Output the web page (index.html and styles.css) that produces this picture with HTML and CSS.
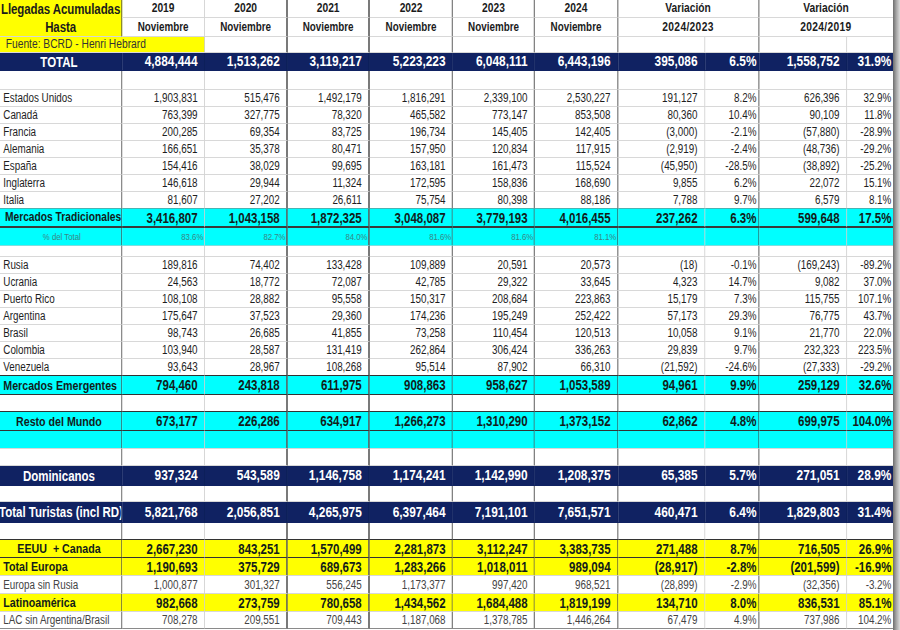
FILE: index.html
```html
<!DOCTYPE html>
<html lang="es">
<head>
<meta charset="utf-8">
<title>Llegadas Acumuladas</title>
<link rel="stylesheet" href="styles.css">
</head>
<body>
<div class="page">
<div class="sheet-wrap">
<table class="sheet">
<colgroup>
<col class="w-lab"><col class="w-yr"><col class="w-yr"><col class="w-yr2"><col class="w-yr"><col class="w-yr2"><col class="w-yr"><col class="w-vn"><col class="w-vp"><col class="w-vn2"><col class="w-vp2">
</colgroup>
<thead>
<tr class="h1">
<td class="c-lab title" rowspan="2">Llegadas Acumuladas<br>Hasta</td>
<td class="c-light">2019</td><td class="c-dk2">2020</td><td class="c-dk2">2021</td><td class="c-dk">2022</td><td class="c-dk">2023</td><td class="c-dk">2024</td>
<td class="c-dk" colspan="2">Variación</td><td class="c-none" colspan="2">Variación</td>
</tr>
<tr class="h2">
<td class="c-light">Noviembre</td><td class="c-dk2">Noviembre</td><td class="c-dk2">Noviembre</td><td class="c-dk">Noviembre</td><td class="c-dk">Noviembre</td><td class="c-dk">Noviembre</td>
<td class="c-dk period" colspan="2">2024/2023</td><td class="c-none period" colspan="2">2024/2019</td>
</tr>
<tr class="src">
<td class="c-light source" colspan="2">Fuente: BCRD - Henri Hebrard</td>
<td class="c-dk2"></td><td class="c-dk2"></td><td class="c-dk"></td><td class="c-dk"></td><td class="c-dk"></td><td class="c-light"></td><td class="c-dk"></td><td class="c-light"></td><td class="c-none"></td>
</tr>
</thead>
<tbody class="data">
<tr class="navy r18"><td class="ctr">TOTAL</td><td>4,884,444</td><td>1,513,262</td><td>3,119,217</td><td>5,223,223</td><td>6,048,111</td><td>6,443,196</td><td>395,086</td><td>6.5%</td><td>1,558,752</td><td>31.9%</td></tr>
<tr class="r19"><td></td><td></td><td></td><td></td><td></td><td></td><td></td><td></td><td></td><td></td><td></td></tr>
<tr><td>Estados Unidos</td><td>1,903,831</td><td>515,476</td><td>1,492,179</td><td>1,816,291</td><td>2,339,100</td><td>2,530,227</td><td>191,127</td><td>8.2%</td><td>626,396</td><td>32.9%</td></tr>
<tr><td>Canadá</td><td>763,399</td><td>327,775</td><td>78,320</td><td>465,582</td><td>773,147</td><td>853,508</td><td>80,360</td><td>10.4%</td><td>90,109</td><td>11.8%</td></tr>
<tr><td>Francia</td><td>200,285</td><td>69,354</td><td>83,725</td><td>196,734</td><td>145,405</td><td>142,405</td><td>(3,000)</td><td>-2.1%</td><td>(57,880)</td><td>-28.9%</td></tr>
<tr><td>Alemania</td><td>166,651</td><td>35,378</td><td>80,471</td><td>157,950</td><td>120,834</td><td>117,915</td><td>(2,919)</td><td>-2.4%</td><td>(48,736)</td><td>-29.2%</td></tr>
<tr><td>España</td><td>154,416</td><td>38,029</td><td>99,695</td><td>163,181</td><td>161,473</td><td>115,524</td><td>(45,950)</td><td>-28.5%</td><td>(38,892)</td><td>-25.2%</td></tr>
<tr><td>Inglaterra</td><td>146,618</td><td>29,944</td><td>11,324</td><td>172,595</td><td>158,836</td><td>168,690</td><td>9,855</td><td>6.2%</td><td>22,072</td><td>15.1%</td></tr>
<tr class="bt"><td>Italia</td><td>81,607</td><td>27,202</td><td>26,611</td><td>75,754</td><td>80,398</td><td>88,186</td><td>7,788</td><td>9.7%</td><td>6,579</td><td>8.1%</td></tr>
<tr class="cyan bold r19 bd2"><td class="tight">Mercados Tradicionales</td><td>3,416,807</td><td>1,043,158</td><td>1,872,325</td><td>3,048,087</td><td>3,779,193</td><td>4,016,455</td><td>237,262</td><td>6.3%</td><td>599,648</td><td>17.5%</td></tr>
<tr class="cyan share r18"><td class="ctr">% del Total</td><td>83.6%</td><td>82.7%</td><td>84.0%</td><td>81.6%</td><td>81.6%</td><td>81.1%</td><td></td><td></td><td></td><td></td></tr>
<tr class="r11"><td></td><td></td><td></td><td></td><td></td><td></td><td></td><td></td><td></td><td></td><td></td></tr>
<tr><td>Rusia</td><td>189,816</td><td>74,402</td><td>133,428</td><td>109,889</td><td>20,591</td><td>20,573</td><td>(18)</td><td>-0.1%</td><td>(169,243)</td><td>-89.2%</td></tr>
<tr><td>Ucrania</td><td>24,563</td><td>18,772</td><td>72,087</td><td>42,785</td><td>29,322</td><td>33,645</td><td>4,323</td><td>14.7%</td><td>9,082</td><td>37.0%</td></tr>
<tr><td>Puerto Rico</td><td>108,108</td><td>28,882</td><td>95,558</td><td>150,317</td><td>208,684</td><td>223,863</td><td>15,179</td><td>7.3%</td><td>115,755</td><td>107.1%</td></tr>
<tr><td>Argentina</td><td>175,647</td><td>37,523</td><td>29,360</td><td>174,236</td><td>195,249</td><td>252,422</td><td>57,173</td><td>29.3%</td><td>76,775</td><td>43.7%</td></tr>
<tr><td>Brasil</td><td>98,743</td><td>26,685</td><td>41,855</td><td>73,258</td><td>110,454</td><td>120,513</td><td>10,058</td><td>9.1%</td><td>21,770</td><td>22.0%</td></tr>
<tr><td>Colombia</td><td>103,940</td><td>28,587</td><td>131,419</td><td>262,864</td><td>306,424</td><td>336,263</td><td>29,839</td><td>9.7%</td><td>232,323</td><td>223.5%</td></tr>
<tr class="bd"><td>Venezuela</td><td>93,643</td><td>28,967</td><td>108,268</td><td>95,514</td><td>87,902</td><td>66,310</td><td>(21,592)</td><td>-24.6%</td><td>(27,333)</td><td>-29.2%</td></tr>
<tr class="cyan bold r19 bd"><td>Mercados Emergentes</td><td>794,460</td><td>243,818</td><td>611,975</td><td>908,863</td><td>958,627</td><td>1,053,589</td><td>94,961</td><td>9.9%</td><td>259,129</td><td>32.6%</td></tr>
<tr class="bd"><td></td><td></td><td></td><td></td><td></td><td></td><td></td><td></td><td></td><td></td><td></td></tr>
<tr class="cyan bold r19 bd"><td class="ctr">Resto del Mundo</td><td>673,177</td><td>226,286</td><td>634,917</td><td>1,266,273</td><td>1,310,290</td><td>1,373,152</td><td>62,862</td><td>4.8%</td><td>699,975</td><td>104.0%</td></tr>
<tr class="cyan r18"><td></td><td></td><td></td><td></td><td></td><td></td><td></td><td></td><td></td><td></td><td></td></tr>
<tr><td></td><td></td><td></td><td></td><td></td><td></td><td></td><td></td><td></td><td></td><td></td></tr>
<tr class="navy r20"><td class="ctr">Dominicanos</td><td>937,324</td><td>543,589</td><td>1,146,758</td><td>1,174,241</td><td>1,142,990</td><td>1,208,375</td><td>65,385</td><td>5.7%</td><td>271,051</td><td>28.9%</td></tr>
<tr class="r16"><td></td><td></td><td></td><td></td><td></td><td></td><td></td><td></td><td></td><td></td><td></td></tr>
<tr class="navy r21"><td class="clip">Total Turistas (incl RD)</td><td>5,821,768</td><td>2,056,851</td><td>4,265,975</td><td>6,397,464</td><td>7,191,101</td><td>7,651,571</td><td>460,471</td><td>6.4%</td><td>1,829,803</td><td>31.4%</td></tr>
<tr class="bd"><td></td><td></td><td></td><td></td><td></td><td></td><td></td><td></td><td></td><td></td><td></td></tr>
<tr class="yellow bold r18 bd"><td class="ctr pre">EEUU  + Canada</td><td>2,667,230</td><td>843,251</td><td>1,570,499</td><td>2,281,873</td><td>3,112,247</td><td>3,383,735</td><td>271,488</td><td>8.7%</td><td>716,505</td><td>26.9%</td></tr>
<tr class="yellow bold r18"><td>Total Europa</td><td>1,190,693</td><td>375,729</td><td>689,673</td><td>1,283,266</td><td>1,018,011</td><td>989,094</td><td>(28,917)</td><td>-2.8%</td><td>(201,599)</td><td>-16.9%</td></tr>
<tr class="sub r18"><td>Europa sin Rusia</td><td>1,000,877</td><td>301,327</td><td>556,245</td><td>1,173,377</td><td>997,420</td><td>968,521</td><td>(28,899)</td><td>-2.9%</td><td>(32,356)</td><td>-3.2%</td></tr>
<tr class="yellow bold r18"><td>Latinoamérica</td><td>982,668</td><td>273,759</td><td>780,658</td><td>1,434,562</td><td>1,684,488</td><td>1,819,199</td><td>134,710</td><td>8.0%</td><td>836,531</td><td>85.1%</td></tr>
<tr class="sub last"><td>LAC sin Argentina/Brasil</td><td>708,278</td><td>209,551</td><td>709,443</td><td>1,187,068</td><td>1,378,785</td><td>1,446,264</td><td>67,479</td><td>4.9%</td><td>737,986</td><td>104.2%</td></tr>
</tbody>
</table>
</div>
<div class="edge"></div>
</div>
</body>
</html>
```

FILE: styles.css
```css
html, body {
  margin: 0;
  padding: 0;
  background: #ffffff;
}
body {
  font-family: "Liberation Sans", Arial, "DejaVu Sans Condensed", sans-serif;
  color: #222;
}
.page {
  display: flex;
  width: 900px;
  height: 630px;
  overflow: hidden;
}
/* the sheet is laid out at full width and squeezed horizontally
   to reproduce the narrow spreadsheet typeface */
.sheet-wrap {
  width: 893px;
  flex: none;
  overflow: hidden;
}
.sheet {
  width: 1089px;
  border-collapse: separate;
  border-spacing: 0;
  table-layout: fixed;
  font-size: 12px;
  transform: scaleX(0.82);
  transform-origin: 0 0;
}
.edge {
  flex: 1;
  background: linear-gradient(to right, #6e6e6e, #a9a9a9 50%, #dcdcdc);
}
.w-lab { width: 148.8px; }
.w-yr { width: 101.2px; }
.w-yr2 { width: 100px; }
.w-vn { width: 106.1px; }
.w-vp { width: 65.9px; }
.w-vn2 { width: 107.3px; }
.w-vp2 { width: 56.1px; }

td {
  padding: 0 8px 0 4px;
  border-right: 1px solid #cfcfcf;
  border-bottom: 1px solid #d8d8d8;
  white-space: nowrap;
  overflow: hidden;
  text-align: right;
  vertical-align: middle;
  line-height: 1;
  height: 17px;
  box-sizing: border-box;
  color: #1e1e1e;
}

/* header */
thead td {
  text-align: center;
  font-weight: 700;
  color: #1b1b1b;
  padding: 0;
}
thead tr.h1 td { height: 18px; font-size: 12.5px; }
thead tr.h2 td { height: 19px; font-size: 12px; }
thead tr.h2 td.period { font-size: 12.5px; letter-spacing: 0.4px; }
thead tr.h1 td.title {
  background: #ffff00;
  font-size: 14px;
  line-height: 18px;
  border-right: 1px solid #4a4a4a;
  border-bottom: 1px solid #d6d6d6;
  letter-spacing: -0.1px;
}
thead tr.src td { height: 16px; }
thead td.source {
  background: #ffff00;
  text-align: left;
  font-weight: 400;
  font-size: 12.5px;
  color: #333;
  padding-left: 7px;
}
.c-light { border-right: 1px solid #cfcfcf; }
.c-dk { border-right: 1px solid #3c3c3c; }
.c-dk2 { border-right: 2px solid #5c5c5c; }
.c-none { border-right: 0; }

/* data columns */
.data td:nth-child(1) { text-align: left; border-right-color: #4a4a4a; }
.data td:nth-child(3),
.data td:nth-child(4) { border-right: 2px solid #5c5c5c; }
.data td:nth-child(5),
.data td:nth-child(6),
.data td:nth-child(7),
.data td:nth-child(9) { border-right-color: #3a3a3a; }
.data td:nth-child(9),
.data td:nth-child(11) { padding-right: 2px; }
.data td:nth-child(11) { border-right: 0; }

/* row heights */
tr.r11 td { height: 11px; }
tr.r16 td { height: 16px; }
tr.r18 td { height: 18px; }
tr.r19 td { height: 19px; }
tr.r20 td { height: 20px; }
tr.r21 td { height: 21px; }

/* row borders */
tr.bt td { border-bottom-color: #48b3b3; }
tr.bd td { border-bottom-color: #333; }
tr.bd2 td { border-bottom: 2px solid #3a3a3a; }
tr.last td { border-bottom-color: #8a8a8a; }

/* row kinds */
.navy td {
  background: #102262;
  color: #ffffff;
  font-weight: 700;
  font-size: 14.5px;
  border-bottom-color: #102262;
}
.data .navy td { border-right-color: #0d1f5a; }
.cyan td { background: #00ffff; }
.yellow td { background: #ffff00; }
.bold td {
  font-weight: 700;
  font-size: 14px;
  color: #121c1a;
}
.bold td:first-child { font-size: 13px; }
.bold td.tight { font-size: 12.5px; padding-left: 6px; }
.share td {
  font-size: 9.5px;
  color: #3b8585;
  padding-right: 1px;
  border-bottom-color: #7fdede;
}
.data td.ctr { text-align: center; }
.navy td:first-child { font-size: 14px; }
.data td.clip { padding-left: 0; text-indent: -1px; font-size: 14px; }
td.pre { white-space: pre; }
.sub td { color: #444; }
```
